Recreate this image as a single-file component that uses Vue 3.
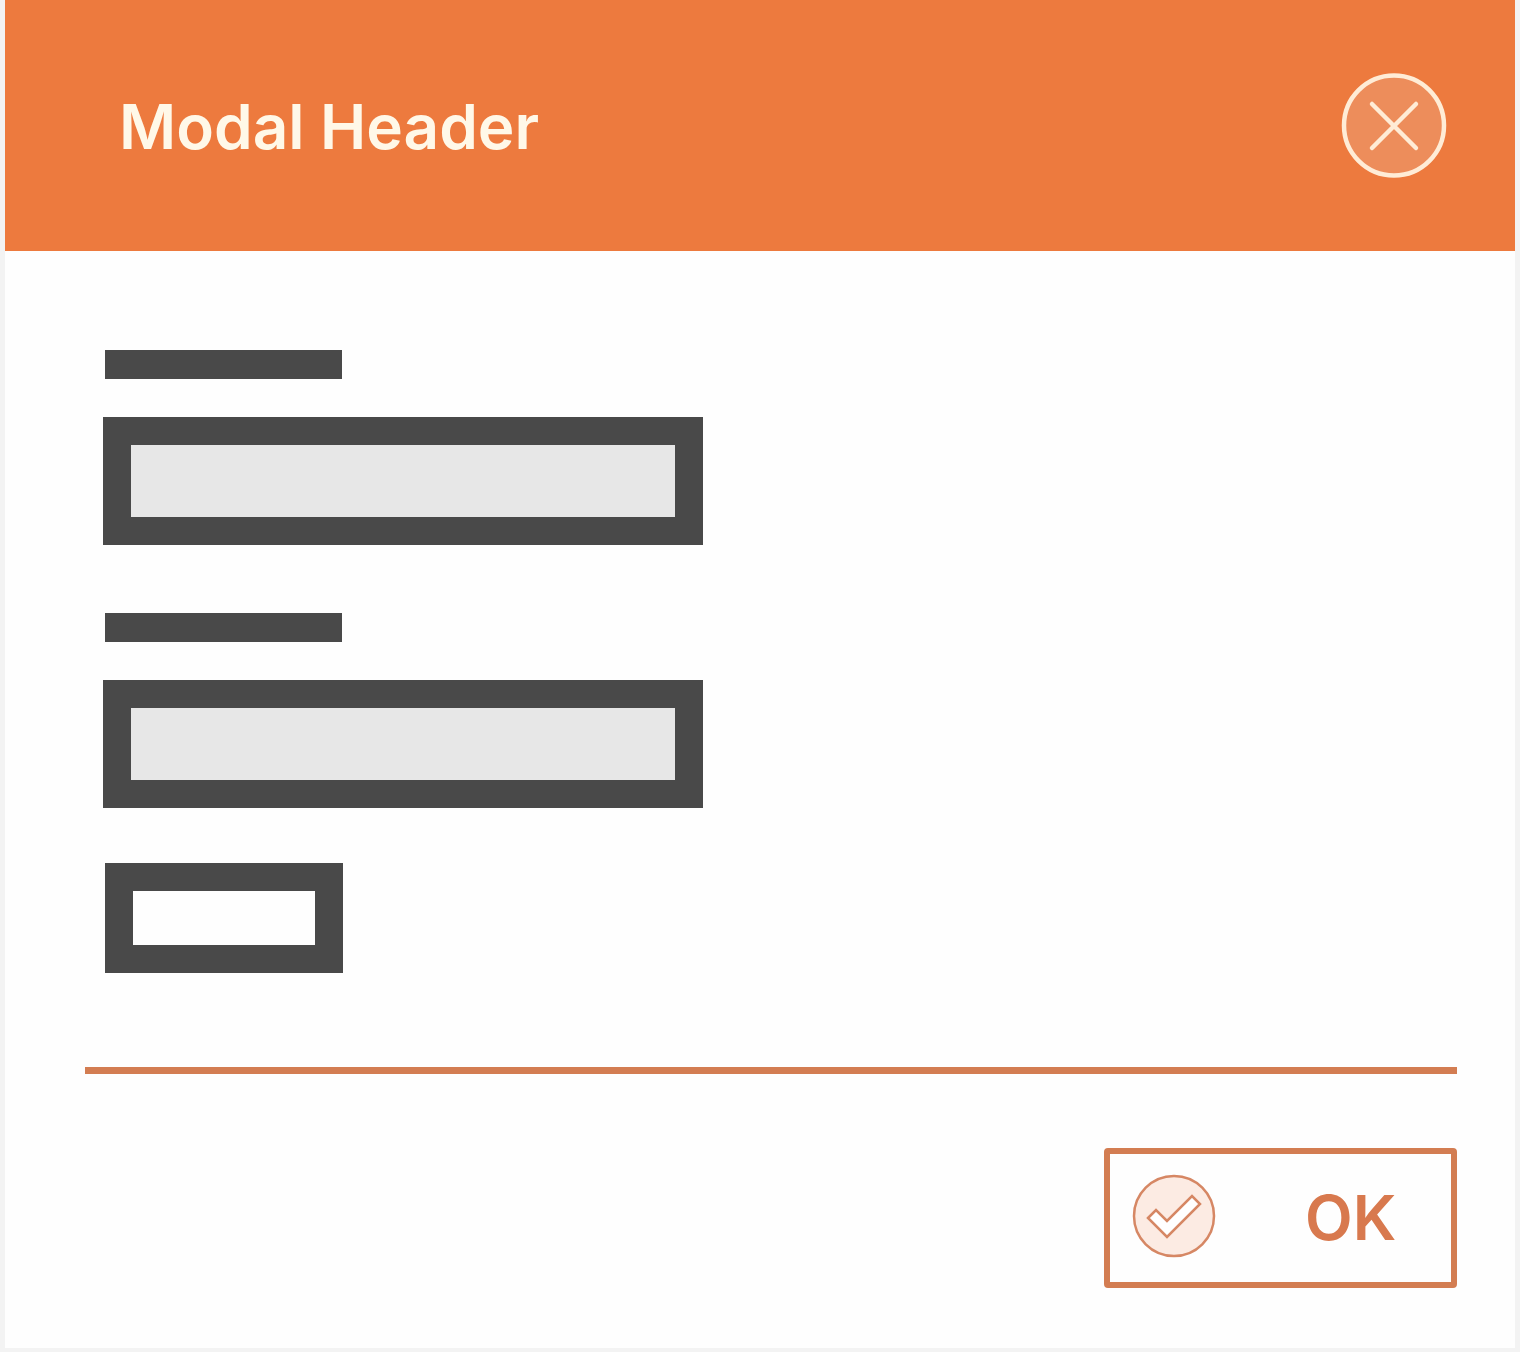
<script setup>
import { ref } from 'vue'

const open = ref(true)
const fields = ref([
  { id: 'first-field', name: 'First field', value: '' },
  { id: 'second-field', name: 'Second field', value: '' },
])
</script>

<template>
  <div class="page">
    <section v-if="open" class="modal" role="dialog" aria-labelledby="modal-title">
      <header class="modal-header">
        <h1 id="modal-title">Modal Header</h1>
        <button class="close" type="button" aria-label="Close" @click="open = false">
          <svg viewBox="0 0 106 106" aria-hidden="true">
            <circle cx="53" cy="53.5" r="50" fill="#ed8d5b" stroke="#ffecd6" stroke-width="4.5" />
            <path d="M31 32L75 76M75 32L31 76" fill="none" stroke="#ffecd6" stroke-width="4.5" stroke-linecap="round" />
          </svg>
        </button>
      </header>

      <form class="modal-form" @submit.prevent="open = false">
        <div class="fields">
          <div v-for="field in fields" :key="field.id" class="field">
            <label :for="field.id" class="field-label"></label>
            <input :id="field.id" v-model="field.value" class="field-input" type="text" :aria-label="field.name" />
          </div>
          <button class="action" type="button" aria-label="Action"></button>
        </div>

        <footer class="modal-footer">
          <button class="ok" type="submit">
            <svg viewBox="0 0 84 84" aria-hidden="true">
              <circle cx="42" cy="42" r="40" fill="#fcebe3" stroke="#d68764" stroke-width="2.5" />
              <path d="M16 44L24 36L35 47L60 22L68 30L35 63Z" fill="#fff" stroke="#d68764" stroke-width="2.5" />
            </svg>
            <span>OK</span>
          </button>
        </footer>
      </form>
    </section>
  </div>
</template>

<style>
body {
  background: #f3f3f3;
}
</style>

<style scoped>
* {
  box-sizing: border-box;
}

.page {
  padding: 0 5px 4px;
  font-family: Inter, "Open Sans", sans-serif;
}

.modal {
  background: #fefefe;
}

.modal-header {
  display: flex;
  align-items: center;
  justify-content: space-between;
  padding: 72px 68px 73px 114px;
  background: #ed7a3e;
}

h1 {
  margin: 0;
  padding-top: 4px;
  color: #fff8e8;
  font-size: 62px;
  font-weight: 600;
  line-height: 72px;
}

button {
  font-family: inherit;
  cursor: pointer;
}

svg {
  display: block;
  width: 100%;
  height: 100%;
}

.close {
  flex: none;
  width: 106px;
  height: 106px;
  padding: 0;
  border: 0;
  border-radius: 50%;
  background: none;
}

.modal-form {
  padding: 99px 58px 60px 80px;
}

.fields {
  display: flex;
  flex-direction: column;
  padding: 0 18px 94px;
}

.field {
  display: flex;
  flex-direction: column;
  gap: 38px;
  margin-bottom: 68px;
}

.field:nth-last-child(2) {
  margin-bottom: 55px;
}

.field-label {
  width: 237px;
  height: 29px;
  margin-left: 2px;
  background: #494949;
}

.field-input {
  width: 100%;
  max-width: 600px;
  height: 128px;
  padding: 0 16px;
  border: 28px solid #494949;
  border-radius: 0;
  background: #e7e7e7;
  font: 32px Inter, sans-serif;
}

.action {
  width: 238px;
  height: 110px;
  margin-left: 2px;
  padding: 0;
  border: 28px solid #494949;
  background: #fefefe;
}

.modal-footer {
  display: flex;
  justify-content: flex-end;
  padding-top: 74px;
  border-top: 7px solid #d37d52;
}

.ok {
  display: flex;
  align-items: center;
  width: 353px;
  height: 140px;
  padding: 0 0 4px 22px;
  border: 6px solid #d37d52;
  border-radius: 4px;
  background: #fefefe;
  color: #d8794e;
  font-size: 62px;
  font-weight: 600;
  line-height: 72px;
}

.ok svg {
  flex: none;
  width: 84px;
  height: 84px;
}

.ok span {
  padding-top: 4px;
  margin-left: 89px;
}
</style>
